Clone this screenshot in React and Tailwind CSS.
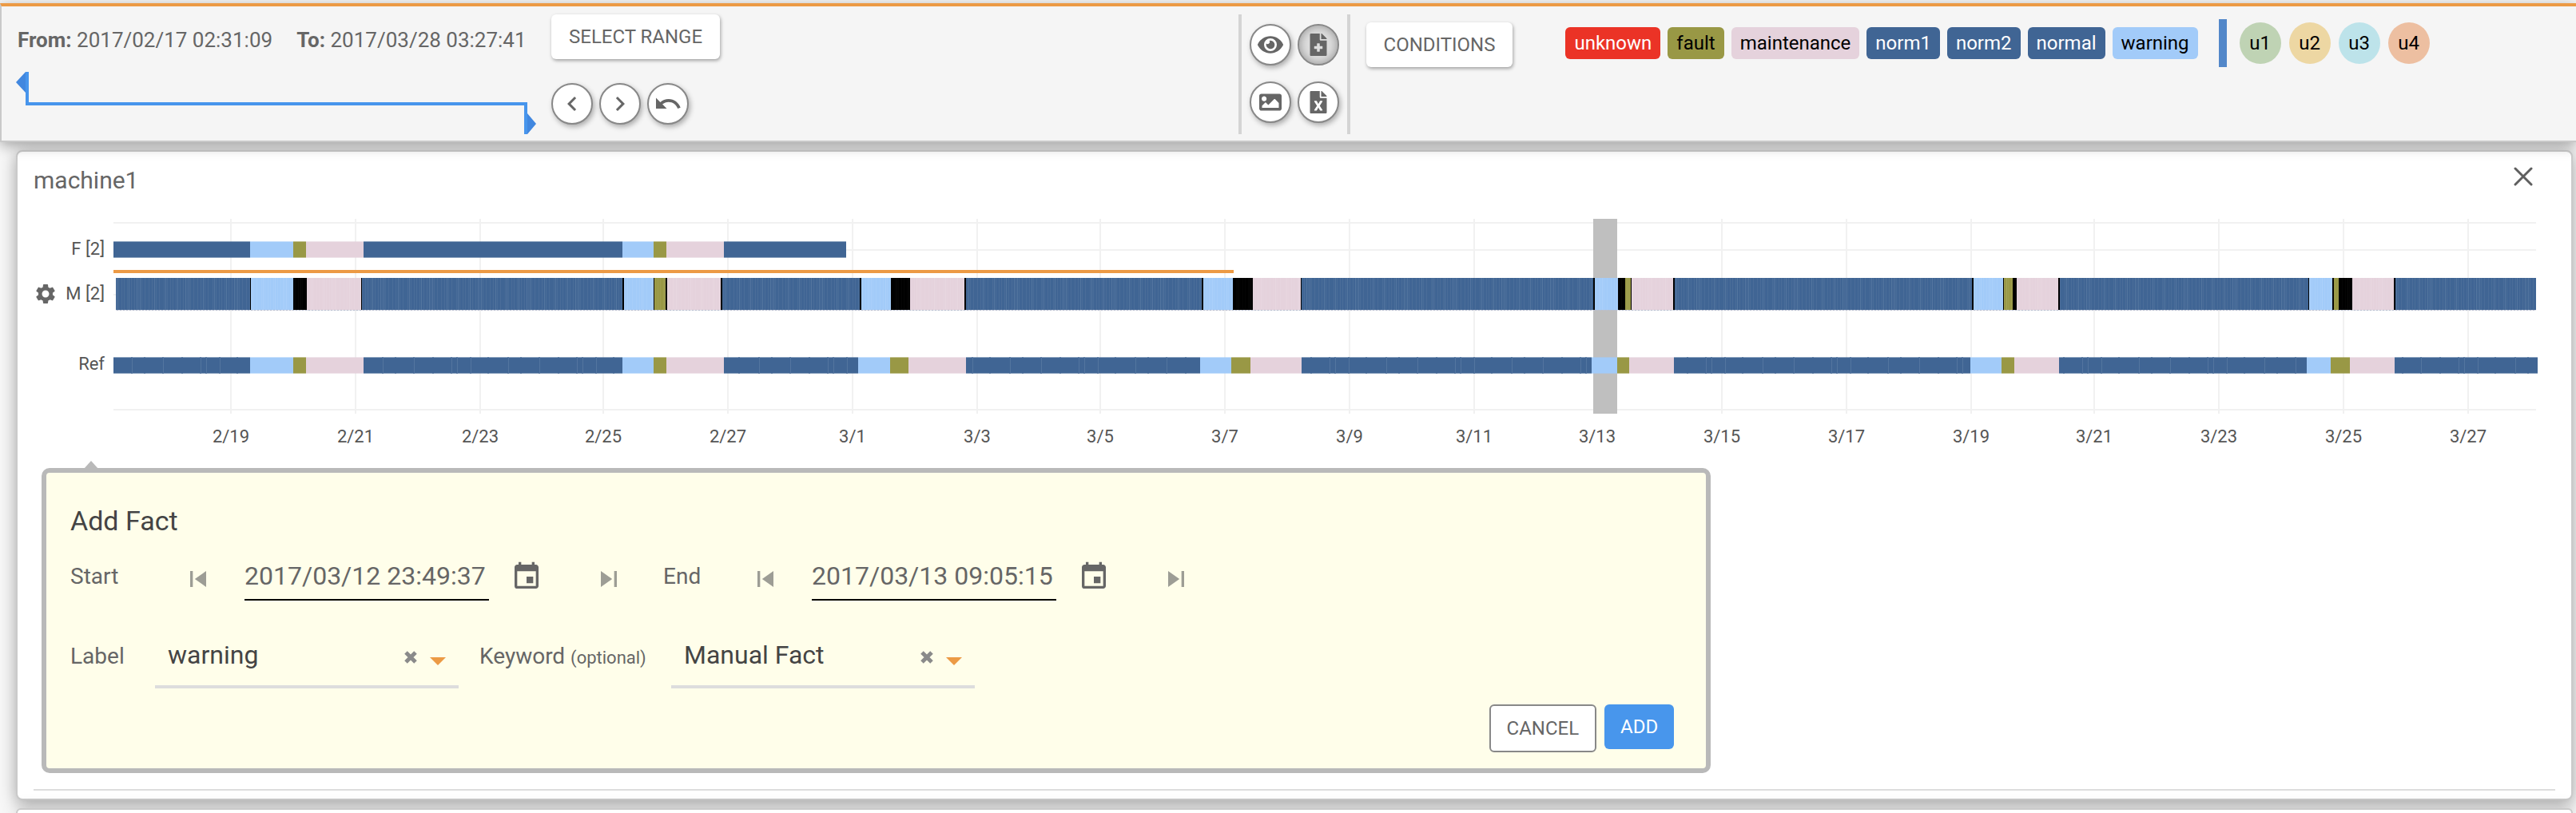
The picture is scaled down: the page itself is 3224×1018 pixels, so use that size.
import React from "react";
import {
  MdChevronLeft,
  MdChevronRight,
  MdUndo,
  MdSettings,
  MdSkipPrevious,
  MdSkipNext,
  MdEvent,
} from "react-icons/md";
import { FaEye, FaFileMedical, FaImage, FaFileExcel } from "react-icons/fa";

const COLORS = {
  n: "#406594",
  w: "#a2cbf9",
  f: "#999845",
  m: "#e5d2dc",
  k: "#000000",
};

// Timeline units: one lane spans START..END.
const START = 142;
const END = 3174;
const pct = (v) => `${((v - START) / (END - START)) * 100}%`;
const span = (a, b) => `${((b - a) / (END - START)) * 100}%`;

// Each lane is a start position followed by [condition, end position] pairs.
const FACTS = {
  from: 142,
  items: [
    ["n", 313], ["w", 367], ["f", 383], ["m", 455], ["n", 779], ["w", 818],
    ["f", 834], ["m", 906], ["n", 1059],
  ],
};

const MODEL = {
  from: 145,
  items: [
    ["n", 313], ["k", 314], ["w", 367], ["k", 384], ["m", 452], ["k", 453],
    ["n", 779], ["k", 781], ["w", 818], ["k", 819], ["f", 833], ["k", 835],
    ["m", 902], ["k", 904], ["n", 1076], ["k", 1078], ["w", 1115], ["k", 1139],
    ["m", 1207], ["k", 1209], ["n", 1504], ["k", 1506], ["w", 1543], ["k", 1568],
    ["m", 1628], ["k", 1629], ["n", 1994], ["k", 1996], ["w", 2025], ["k", 2034],
    ["f", 2041], ["k", 2042], ["m", 2094], ["k", 2096], ["n", 2468], ["k", 2470],
    ["w", 2507], ["k", 2508], ["f", 2519], ["k", 2524], ["m", 2576], ["k", 2578],
    ["n", 2889], ["k", 2890], ["w", 2919], ["k", 2921], ["f", 2927], ["k", 2944],
    ["m", 2996], ["k", 2998], ["n", 3174],
  ],
};

const REFERENCE = {
  from: 142,
  items: [
    ["n", 313], ["w", 367], ["f", 383], ["m", 455], ["n", 779], ["w", 818],
    ["f", 834], ["m", 906], ["n", 1074], ["w", 1114], ["f", 1137], ["m", 1209],
    ["n", 1502], ["w", 1541], ["f", 1565], ["m", 1629], ["n", 1992], ["w", 2024],
    ["f", 2039], ["m", 2095], ["n", 2466], ["w", 2505], ["f", 2521], ["m", 2577],
    ["n", 2887], ["w", 2917], ["f", 2941], ["m", 2997], ["n", 3176],
  ],
};

const TICKS = [
  ["2/19", 289], ["2/21", 445], ["2/23", 601], ["2/25", 755], ["2/27", 911],
  ["3/1", 1067], ["3/3", 1223], ["3/5", 1377], ["3/7", 1533], ["3/9", 1689],
  ["3/11", 1845], ["3/13", 1999], ["3/15", 2155], ["3/17", 2311], ["3/19", 2467],
  ["3/21", 2621], ["3/23", 2777], ["3/25", 2933], ["3/27", 3089],
];

const CONDITIONS = [
  ["unknown", "bg-[#eb3326] text-white"],
  ["fault", "bg-[#999845] text-black"],
  ["maintenance", "bg-[#e5d2dc] text-black"],
  ["norm1", "bg-[#406594] text-white"],
  ["norm2", "bg-[#406594] text-white"],
  ["normal", "bg-[#406594] text-white"],
  ["warning", "bg-[#a2cbf9] text-black"],
];

const USERS = [
  ["u1", "bg-[#bfd3b4]"],
  ["u2", "bg-[#edd7a3]"],
  ["u3", "bg-[#bde3ea]"],
  ["u4", "bg-[#edbfa1]"],
];

function Lane({ lane, y, height, striped = false, edged = false, marked = false }) {
  let from = lane.from;
  return (
    <g shapeRendering="crispEdges">
      {lane.items.map(([kind, to]) => {
        const x = pct(from);
        const width = span(from, to);
        const key = `${kind}-${from}`;
        from = to;
        return (
          <g key={key} fill={COLORS[kind]}>
            {edged && <rect x={x} y={y} width={width} height={height + 1} opacity="0.6" />}
            <rect x={x} y={edged ? y + 1 : y} width={width} height={edged ? height - 1 : height} />
            {marked && kind === "n" && (
              <rect x={x} y={y} width={width} height={height + 1} fill="url(#marks)" />
            )}
            {striped && (
              <>
                <rect x={x} y={y} width={width} height={height} fill="url(#stripes)" opacity={kind === "k" ? 0.4 : 1} />
                <rect x={x} y={y + height} width={width} height="1" fill="url(#dots)" />
              </>
            )}
          </g>
        );
      })}
    </g>
  );
}

function Plot() {
  return (
    <svg className="block h-[290px] min-w-0 flex-1 overflow-visible" role="img" aria-label="machine1 timeline">
      <defs>
        <pattern id="stripes" width="61" height="8" patternUnits="userSpaceOnUse">
          {[2, 6, 10, 13, 17, 22, 26, 31, 35, 39, 44, 48, 53, 57].map((x) => (
            <rect key={x} x={x} y="0" width="1" height="8" fill="#ffffff" opacity="0.05" />
          ))}
          {[4, 19, 29, 33, 51].map((x) => (
            <rect key={x} x={x} y="0" width="1" height="8" fill="#ffffff" opacity="0.1" />
          ))}
        </pattern>
        <pattern id="dots" width="4" height="1" patternUnits="userSpaceOnUse">
          <rect x="0" y="0" width="4" height="1" fill="#b9bfd0" opacity="0.4" />
          <rect x="0" y="0" width="2" height="1" fill="#b9bfd0" />
        </pattern>
        <pattern id="marks" width="157" height="300" patternUnits="userSpaceOnUse">
          {[23, 62, 109, 116, 133].map((x) => (
            <rect key={x} x={x} y="174" width="1" height="19" fill="#ffffff" opacity="0.1" />
          ))}
          {[22, 38, 61, 85, 108, 115, 132, 154].map((x) => (
            <g key={x} fill="#406594" opacity="0.6">
              <rect x={x} y="173" width="2" height="1" />
              <rect x={x} y="193" width="2" height="1" />
            </g>
          ))}
        </pattern>
      </defs>
      <g shapeRendering="crispEdges">
        {[4, 38, 94, 182, 238].map((y) => (
          <rect key={y} x="0" y={y} width="100%" height="2" fill="#f1f1f1" />
        ))}
        {TICKS.map(([label, x]) => (
          <rect key={label} x={pct(x - 1)} y="0" width="2" height="244" fill="#f1f1f1" />
        ))}
        <rect x={pct(1994)} y="0" width={span(1994, 2024)} height="244" fill="#bfbfbf" />
        <rect x="0" y="64" width={span(142, 1544)} height="4" fill="#ec9a45" />
      </g>
      <Lane lane={FACTS} y={28} height={20} edged />
      <Lane lane={MODEL} y={74} height={40} striped />
      <Lane lane={REFERENCE} y={173} height={20} edged marked />
      {TICKS.map(([label, x]) => (
        <text key={label} x={pct(x)} y="280" textAnchor="middle" className="fill-[#555555] text-[22px]">
          {label}
        </text>
      ))}
    </svg>
  );
}

function RoundButton({ label, active = false, children }) {
  const tone = active
    ? "bg-[#dedede] shadow-[inset_0_0_12px_rgba(0,0,0,0.35)]"
    : "bg-white shadow-[2px_3px_6px_rgba(0,0,0,0.3)]";
  return (
    <button
      type="button"
      aria-label={label}
      aria-pressed={active}
      className={`flex size-[52px] items-center justify-center rounded-full border-2 border-[#888888] text-[#666666] ${tone}`}
    >
      {children}
    </button>
  );
}

function RaisedButton({ children }) {
  return (
    <button
      type="button"
      className="h-14 shrink-0 rounded-md bg-white px-[22px] text-2xl whitespace-nowrap shadow-[1px_2px_4px_rgba(0,0,0,0.35)]"
    >
      {children}
    </button>
  );
}

function Header() {
  return (
    <header className="relative z-10 flex border-t-4 border-b-2 border-l-2 border-t-[#ec9a45] border-b-[#c9c9c9] border-l-[#c9c9c9] bg-[#f5f5f5] pt-[10px] pb-2 shadow-[0_4px_16px_rgba(0,0,0,0.35)]">
      <div className="flex w-[48%] shrink-0 gap-[18px] pl-[18px]">
        <div className="pt-4">
          <p className="flex gap-[30px] pl-0.5 text-[26px] leading-8 whitespace-nowrap">
            <span><b>From:</b> 2017/02/17 02:31:09</span>
            <span><b>To:</b> 2017/03/28 03:27:41</span>
          </p>
          <svg className="mt-6 block h-[78px] w-[652px]" viewBox="0 0 652 78" aria-hidden="true">
            <path d="M16 0h-4L0 13l12 13h4zM636 78h4l11-13-11-13h-4z" fill="#4187df" />
            <path d="M14 0v40h624v38" fill="none" stroke="#4795ec" strokeWidth="4" />
          </svg>
        </div>
        <div className="flex flex-col items-start justify-between pb-3">
          <RaisedButton>SELECT RANGE</RaisedButton>
          <div className="flex gap-2">
            <RoundButton label="Previous"><MdChevronLeft size={36} /></RoundButton>
            <RoundButton label="Next"><MdChevronRight size={36} /></RoundButton>
            <RoundButton label="Undo"><MdUndo size={36} /></RoundButton>
          </div>
        </div>
      </div>
      <div className="ml-px grid shrink-0 grid-cols-2 content-start gap-x-2 gap-y-5 border-x-4 border-[#d4d4d4] px-[10px] pt-3">
        <RoundButton label="Visibility"><FaEye size={32} /></RoundButton>
        <RoundButton label="Add fact" active><FaFileMedical size={28} /></RoundButton>
        <RoundButton label="Export image"><FaImage size={28} /></RoundButton>
        <RoundButton label="Export spreadsheet"><FaFileExcel size={28} /></RoundButton>
      </div>
      <div className="ml-5 pt-[10px]">
        <RaisedButton>CONDITIONS</RaisedButton>
      </div>
      <div className="ml-[66px] flex h-[72px] items-center gap-[10px] text-2xl">
        <div className="flex gap-[9px]">
          {CONDITIONS.map(([name, tone]) => (
            <span key={name} className={`h-10 rounded-md px-[11px] leading-10 ${tone}`}>{name}</span>
          ))}
        </div>
        <span className="mr-1.5 ml-4 h-[60px] w-[10px] bg-[#5287c9]" />
        {USERS.map(([name, tone]) => (
          <span key={name} className={`flex size-[52px] items-center justify-center rounded-full text-black ${tone}`}>{name}</span>
        ))}
      </div>
    </header>
  );
}

function TimeField({ id, label, value, labelClass }) {
  return (
    <div className="flex items-center">
      <label htmlFor={id} className={`text-[28px] ${labelClass}`}>{label}</label>
      <button type="button" aria-label={`${label}: earlier`} className="pt-1.5 text-[#9d9d95]">
        <MdSkipPrevious size={40} />
      </button>
      <input
        id={id}
        type="text"
        defaultValue={value}
        className="ml-[38px] h-[60px] w-[306px] border-b-2 border-black bg-transparent text-[32px] outline-none"
      />
      <button type="button" aria-label={`${label}: open calendar`} className="ml-[27px]">
        <MdEvent size={40} />
      </button>
      <button type="button" aria-label={`${label}: later`} className="ml-[63px] pt-1.5 text-[#9d9d95]">
        <MdSkipNext size={40} />
      </button>
    </div>
  );
}

function Picker({ id, value }) {
  return (
    <div className="flex h-20 w-[380px] items-center border-b-4 border-[#dddddd] px-4">
      <select id={id} defaultValue={value} className="min-w-0 flex-1 appearance-none bg-transparent text-[32px] text-[#444444] outline-none">
        <option>{value}</option>
      </select>
      <button type="button" aria-label="Clear" className="pt-1.5">
        <svg className="block size-4" viewBox="0 0 16 16" aria-hidden="true">
          <path d="M2 2l12 12M14 2L2 14" stroke="#8a8a8a" strokeWidth="5" />
        </svg>
      </button>
      <svg className="ml-4 mt-4 block h-[10px] w-5" viewBox="0 0 20 10" aria-hidden="true">
        <path d="M0 0h20L10 10z" fill="#ec9a45" />
      </svg>
    </div>
  );
}

function AddFact() {
  return (
    <form
      aria-label="Add Fact"
      onSubmit={(e) => e.preventDefault()}
      className="relative mt-[22px] ml-[10px] w-[66.2%] rounded-[10px] border-[6px] border-[#b9b9b9] bg-[#fffeea] pt-10 pr-10 pb-5 pl-[30px]"
    >
      <svg className="absolute -top-[15px] left-[47px] h-[10px] w-[18px]" viewBox="0 0 18 10" aria-hidden="true">
        <path d="M9 0l9 10H0z" fill="#b9b9b9" />
      </svg>
      <h2 className="text-[34px] leading-10 text-[#444444]">Add Fact</h2>
      <div className="mt-5 flex gap-12">
        <TimeField id="start" label="Start" value="2017/03/12 23:49:37" labelClass="w-[140px]" />
        <TimeField id="end" label="End" value="2017/03/13 09:05:15" labelClass="w-[108px]" />
      </div>
      <div className="mt-[30px] flex items-center">
        <label htmlFor="label" className="w-[106px] text-[28px]">Label</label>
        <Picker id="label" value="warning" />
        <label htmlFor="keyword" className="ml-[26px] w-60 text-[28px] whitespace-nowrap">
          Keyword <span className="text-[22px]">(optional)</span>
        </label>
        <Picker id="keyword" value="Manual Fact" />
      </div>
      <div className="mt-5 flex items-start justify-end gap-[10px] text-2xl">
        <button type="button" className="h-[60px] rounded-md border-2 border-[#888888] bg-white px-5">CANCEL</button>
        <button type="submit" className="h-14 rounded-md bg-[#4896ec] px-5 text-white">ADD</button>
      </div>
    </form>
  );
}

export default function App() {
  return (
    <div className="flex min-h-screen flex-col bg-[#f7f7f7] pt-1 font-[Roboto,sans-serif] text-[#666666]">
      <Header />
      <section className="mt-[10px] mr-1 ml-5 rounded-lg border-2 border-[#cacaca] bg-white px-5 pt-4 pb-[10px] shadow-[0_4px_20px_rgba(0,0,0,0.35)]">
        <div className="flex justify-between">
          <h1 className="text-[30px] leading-10">machine1</h1>
          <button type="button" aria-label="Close" className="mr-7 flex h-[30px] items-center">
            <svg className="block size-6" viewBox="0 0 24 24" aria-hidden="true">
              <path d="M2 2l20 20M22 2L2 22" stroke="#5f5f5f" strokeWidth="3" strokeLinecap="round" />
            </svg>
          </button>
        </div>
        <div className="mt-7 mr-6 flex">
          <div className="w-[100px] shrink-0 pt-6 pr-[11px] text-right text-[22px] leading-7 text-[#555555]">
            <p>F [2]</p>
            <div className="mt-7 flex h-7 items-center justify-between">
              <button type="button" aria-label="Model settings" className="text-[#666666]">
                <MdSettings size={30} />
              </button>
              <span>M [2]</span>
            </div>
            <p className="mt-[60px]">Ref</p>
          </div>
          <Plot />
        </div>
        <AddFact />
        <hr className="mt-5 border-t-2 border-[#dddddd]" />
      </section>
      <section className="mt-[10px] mr-1 ml-5 flex-1 rounded-t-lg border-2 border-b-0 border-[#cacaca] bg-white shadow-[0_4px_20px_rgba(0,0,0,0.35)]" />
    </div>
  );
}
